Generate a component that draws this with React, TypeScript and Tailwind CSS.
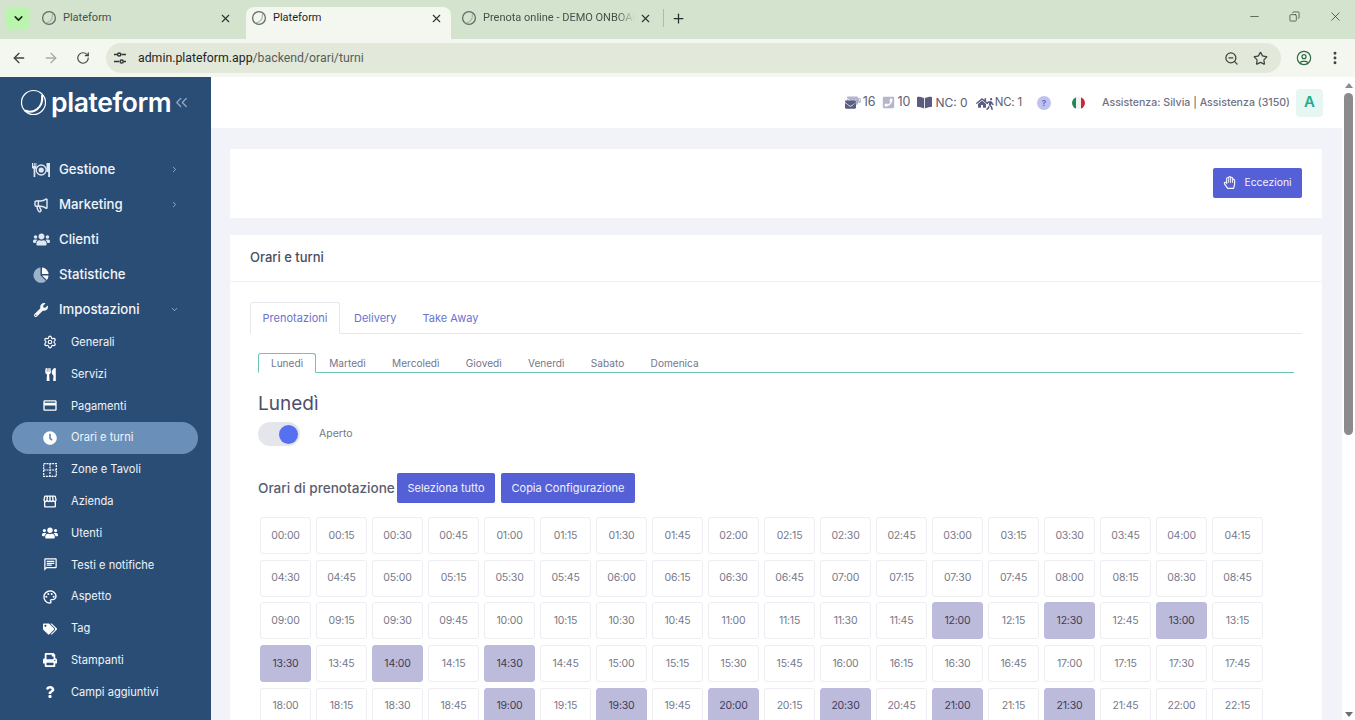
import {
  ArrowLeft,
  ArrowRight,
  ChevronDown,
  ChevronRight,
  ChevronsLeft,
  Copy,
  EllipsisVertical,
  Megaphone,
  Minus,
  Plus,
  RotateCw,
  Settings,
  Star,
  UserCircle,
  X,
  ZoomOut,
} from "lucide-react";
import {
  FaBookOpen,
  FaClock,
  FaHome,
  FaPhoneSquare,
  FaPrint,
  FaQuestion,
  FaRegHandPaper,
  FaTags,
  FaUsers,
  FaUtensils,
  FaWalking,
  FaWrench,
  FaEnvelope,
} from "react-icons/fa";
import { MdOutlineChat, MdOutlineCreditCard, MdOutlinePalette, MdOutlineStorefront } from "react-icons/md";

const appFont = "font-['Inter','Liberation_Sans',sans-serif]";

function TabFavicon() {
  return (
    <svg width="16" height="16" viewBox="0 0 16 16" fill="none" className="shrink-0">
      <circle cx="8" cy="8" r="6.4" stroke="#5f6f66" strokeWidth="1.3" />
      <path d="M4 12.5C7.5 13 12 10.5 11.5 4" stroke="#a9b8ad" strokeWidth="1.2" />
    </svg>
  );
}

function BrowserTab({ title, active, fade, className }: { title: string; active?: boolean; fade?: boolean; className: string }) {
  return (
    <div
      className={`flex h-8 shrink-0 items-center pb-[10px] ${className} ${
        active ? "rounded-t-lg bg-[#f3f7ef] text-[#1f1f1f]" : "text-[#46504a]"
      }`}
    >
      <TabFavicon />
      <span className={`ml-[6px] flex-1 overflow-hidden whitespace-nowrap text-[11px] ${fade ? "[mask-image:linear-gradient(90deg,#000_88%,transparent)]" : ""}`}>
        {title}
      </span>
      <X size={13} strokeWidth={2} className="ml-1 shrink-0 text-[#2c332e]" />
    </div>
  );
}

function BrowserChrome() {
  return (
    <div className="shrink-0 font-['Roboto',sans-serif]">
      <div className="flex h-[39px] items-end bg-[#d3e3cd] pl-[6px]">
        <div className="mb-[9px] flex h-[23px] w-[24px] items-center justify-center rounded-md bg-[#b9f5ac]">
          <ChevronDown size={13} strokeWidth={3} className="text-[#1c2b1c]" />
        </div>
        <div className="ml-[2px] flex items-end">
          <BrowserTab title="Plateform" className="w-[214px] pl-[9px] pr-[14px]" />
          <BrowserTab title="Plateform" active className="w-[205px] pl-[5px] pr-[8px]" />
          <BrowserTab title="Prenota online - DEMO ONBOARDING" fade className="w-[212px] pl-[10px] pr-[11px]" />
        </div>
        <div className="mb-[12px] h-[18px] w-px bg-[#aebcab]" />
        <Plus size={15} strokeWidth={2} className="mb-[13px] ml-[7px] text-[#26302a]" />
        <div className="mb-[15px] ml-auto flex items-center gap-[28px] pr-[12px] text-[#303a33]">
          <Minus size={13} strokeWidth={1.3} />
          <Copy size={11} strokeWidth={1.5} className="-scale-x-100" />
          <X size={15} strokeWidth={1.2} />
        </div>
      </div>
      <div className="flex h-[38px] items-center bg-[#f3f7ef] pl-[11px] pr-[12px] text-[#3c443f]">
        <ArrowLeft size={16} strokeWidth={2} />
        <ArrowRight size={16} strokeWidth={2} className="ml-[16px] text-[#a6aca6]" />
        <RotateCw size={14} strokeWidth={2} className="ml-[17px]" />
        <div className="ml-[16px] flex h-[30px] flex-1 items-center rounded-full bg-[#e2e9db] pl-[5px] pr-[13px]">
          <svg width="16" height="16" viewBox="0 0 16 16" fill="none" stroke="#2f3632" strokeWidth="1.5" className="ml-[1px] shrink-0">
            <path d="M2 4.5h3M9.5 4.5h4.5M2 11.5h5M12 11.5h2" />
            <circle cx="7.2" cy="4.5" r="1.6" />
            <circle cx="9.7" cy="11.5" r="1.6" />
          </svg>
          <span className="ml-[10px] text-[12.3px] text-[#1f2421]">
            admin.plateform.app<span className="text-[#565e58]">/backend/orari/turni</span>
          </span>
          <ZoomOut size={15} strokeWidth={2} className="ml-auto" />
          <Star size={15} strokeWidth={2} className="ml-[14px]" />
        </div>
        <UserCircle size={16} strokeWidth={1.8} className="ml-[15px] text-[#2f6a42]" />
        <EllipsisVertical size={16} strokeWidth={2.4} className="ml-[15px]" />
      </div>
    </div>
  );
}

function PlateIcon() {
  return (
    <svg width="18" height="16" viewBox="0 0 18 16" fill="#dfe7f0" className="shrink-0">
      <path d="M0 1h1v3h.7V1h1v3h.7V1h1v5L3.3 7v8H1.6V7L0 6z" />
      <path d="M14.5 1H18v14h-1.8v-5h-1.7z" />
      <circle cx="9.2" cy="8" r="5" fill="none" stroke="#dfe7f0" strokeWidth="1.3" />
      <circle cx="9.2" cy="8" r="2.6" />
    </svg>
  );
}

function PieIcon() {
  return (
    <svg width="16" height="16" viewBox="0 0 16 16" className="shrink-0">
      <path d="M7.5 .5v8l5.6 5.6A7.7 7.7 0 1 1 7.5 .5z" fill="#9fb3cb" />
      <path d="M9 .5A7 7 0 0 1 15.5 7H9z" fill="#ffffff" />
      <path d="M9 8.5h6.5a7 7 0 0 1-1.6 4.4z" fill="#ffffff" />
    </svg>
  );
}

function TableIcon() {
  return (
    <svg width="14" height="14" viewBox="0 0 14 14" fill="none" stroke="#ffffff" strokeWidth="1.2" strokeDasharray="2 .8" className="shrink-0">
      <path d="M.7.7h12.6v12.6H.7zM7 .7v12.6M.7 7h12.6" />
    </svg>
  );
}

function MainItem({ icon, label, chevron }: { icon: React.ReactNode; label: string; chevron?: "right" | "down" }) {
  return (
    <div className="flex h-[35px] items-center pl-[32px] pr-[32px]">
      <span className="flex w-[18px] justify-center">{icon}</span>
      <span className="ml-[9px] text-[13.2px] font-medium text-[#f2f5f9]">{label}</span>
      {chevron === "right" && <ChevronRight size={9} strokeWidth={2} className="ml-auto text-[#b9c7d8]" />}
      {chevron === "down" && <ChevronDown size={9} strokeWidth={2} className="ml-auto text-[#b9c7d8]" />}
    </div>
  );
}

function SubItem({ icon, label, active }: { icon: React.ReactNode; label: string; active?: boolean }) {
  return (
    <div className={`ml-[12px] mr-[13px] flex h-[31.8px] items-center rounded-full pl-[30px] ${active ? "bg-[#6a8fb8]" : ""}`}>
      <span className="flex w-[16px] justify-center text-white">{icon}</span>
      <span className="ml-[13px] text-[11.1px] text-[#f0f4f8]">{label}</span>
    </div>
  );
}

function Sidebar() {
  return (
    <aside className="w-[211px] shrink-0 overflow-hidden bg-[#2a4d76]">
      <div className="flex h-[50px] items-center pl-[20px] pt-[1px]">
        <svg width="27" height="27" viewBox="0 0 27 27" fill="none" className="shrink-0">
          <circle cx="13.5" cy="13.5" r="12" stroke="#ffffff" strokeWidth="1.2" />
          <path d="M5 21.5C12 25 24 20 22 6" stroke="#ffffff" strokeWidth="2" fill="none" />
        </svg>
        <span className="ml-[4px] text-[26.5px] leading-none font-semibold tracking-[-0.4px] text-white">plateform</span>
        <ChevronsLeft size={19} strokeWidth={1.6} className="ml-[1px] text-[#93a8c4]" />
      </div>
      <nav className="pt-[25px]">
        <MainItem icon={<PlateIcon />} label="Gestione" chevron="right" />
        <MainItem icon={<Megaphone size={16} strokeWidth={2.2} color="#dfe7f0" />} label="Marketing" chevron="right" />
        <MainItem icon={<FaUsers size={17} color="#dfe7f0" />} label="Clienti" />
        <MainItem icon={<PieIcon />} label="Statistiche" />
        <MainItem icon={<FaWrench size={14} color="#f4f6f9" />} label="Impostazioni" chevron="down" />
        <div className="-mt-[0.5px]">
          <SubItem icon={<Settings size={14} strokeWidth={2} />} label="Generali" />
          <SubItem icon={<FaUtensils size={13} />} label="Servizi" />
          <SubItem icon={<MdOutlineCreditCard size={17} />} label="Pagamenti" />
          <SubItem icon={<FaClock size={14} />} label="Orari e turni" active />
          <SubItem icon={<TableIcon />} label="Zone e Tavoli" />
          <SubItem icon={<MdOutlineStorefront size={17} />} label="Azienda" />
          <SubItem icon={<FaUsers size={16} />} label="Utenti" />
          <SubItem icon={<MdOutlineChat size={15} />} label="Testi e notifiche" />
          <SubItem icon={<MdOutlinePalette size={16} />} label="Aspetto" />
          <SubItem icon={<FaTags size={14} />} label="Tag" />
          <SubItem icon={<FaPrint size={14} />} label="Stampanti" />
          <SubItem icon={<FaQuestion size={12} />} label="Campi aggiuntivi" />
        </div>
      </nav>
    </aside>
  );
}

function TopBar() {
  return (
    <header className="flex h-[51px] items-center justify-end bg-white pr-[19px] text-[#5d6072]">
      <span className="relative h-[15px] w-[16px]">
        <FaEnvelope size={11} className="absolute top-0 left-[2px] text-[#b4b6cc]" />
        <FaEnvelope size={11} className="absolute bottom-0 left-0 text-[#5a5c80]" />
        <FaPhoneSquare size={5} className="absolute top-[3px] right-0 text-[#a9abc6]" />
      </span>
      <span className="ml-[2px] text-[12.5px]">16</span>
      <FaPhoneSquare size={13} className="ml-[7px] text-[#b4b6cc]" />
      <span className="ml-[2px] text-[12.5px]">10</span>
      <FaBookOpen size={15} className="ml-[7px] text-[#5a5c80]" />
      <span className="ml-[3px] text-[12px]">NC: 0</span>
      <span className="relative ml-[8px] flex w-[17px] text-[#5a5c80]">
        <FaHome size={12} />
        <FaWalking size={12} className="absolute top-[1px] left-[8px]" />
      </span>
      <span className="ml-[2px] text-[11.5px] tracking-[-0.2px]">NC: 1</span>
      <span className="ml-[15px] flex h-[14px] w-[14px] items-center justify-center rounded-full bg-[#bfc2ee] text-[8px] font-semibold text-[#5560d6]">?</span>
      <span className="ml-[21px] flex h-[12px] w-[13px] overflow-hidden rounded-full">
        <span className="flex-1 bg-[#1c8a55]" />
        <span className="flex-1 bg-[#f2f2f2]" />
        <span className="flex-1 bg-[#c8283c]" />
      </span>
      <span className="ml-[17px] text-[10.6px] font-medium text-[#6f7182]">Assistenza: Silvia | Assistenza (3150)</span>
      <span className="ml-[6px] flex h-[28px] w-[27px] items-center justify-center rounded-sm bg-[#e6f6f3] text-[15px] font-semibold text-[#1cae8a]">A</span>
    </header>
  );
}

const topTabs = ["Prenotazioni", "Delivery", "Take Away"];
const days = ["Lunedì", "Martedì", "Mercoledì", "Giovedì", "Venerdì", "Sabato", "Domenica"];
const selected = ["12:00", "12:30", "13:00", "13:30", "14:00", "14:30", "19:00", "19:30", "20:00", "20:30", "21:00", "21:30"];

const slots = Array.from({ length: 96 }, (_, i) => {
  const h = String(Math.floor(i / 4)).padStart(2, "0");
  const m = String((i % 4) * 15).padStart(2, "0");
  return `${h}:${m}`;
});

function SlotGrid() {
  return (
    <div className="mt-[14px] ml-[2px] grid grid-cols-[repeat(18,51px)] gap-x-[5px] gap-y-[5.7px]">
      {slots.map((slot) => (
        <div
          key={slot}
          className={`flex h-[37px] items-center justify-center rounded-[3px] border text-[10.5px] tracking-[-0.2px] ${
            selected.includes(slot)
              ? "border-[#bdbbdb] bg-[#bdbbdb] text-[#3c3c58]"
              : "border-[#eeeef2] bg-white text-[#77798a]"
          }`}
        >
          {slot}
        </div>
      ))}
    </div>
  );
}

export default function App() {
  return (
    <div className={`flex h-screen flex-col overflow-hidden ${appFont}`}>
      <BrowserChrome />
      <div className="flex min-h-0 flex-1">
        <Sidebar />
        <main className="min-w-0 flex-1 overflow-hidden bg-[#f2f3f8]">
          <TopBar />
          <div className="pl-[19px] pr-[20px] pt-[21px]">
            <section className="flex h-[69px] items-center justify-end bg-white pb-[2px] pr-[20px]">
              <button className="flex h-[30px] w-[89px] items-center justify-center gap-[8px] rounded-[2px] bg-[#5560d6] text-[10.4px] text-[#f1f2fd]">
                <FaRegHandPaper size={13} />
                Eccezioni
              </button>
            </section>
            <section className="mt-[17px] bg-white">
              <div className="flex h-[47px] items-center border-b border-[#eff0f4] px-[20px] text-[13px] font-medium text-[#4a4c60]">
                Orari e turni
              </div>
              <div className="px-[20px] pt-[20px]">
                <div className="flex h-[32px] border-b border-[#e6e7ec]">
                  {topTabs.map((tab, i) => (
                    <div
                      key={tab}
                      className={`flex h-[32px] items-center border px-[13px] text-[11px] text-[#6a72d0] ${
                        i === 0 ? "w-[90px] justify-center rounded-t-[3px] border-[#e6e7ec] border-b-white bg-white" : "border-transparent"
                      } ${i === 2 ? "-ml-[2px]" : ""}`}
                    >
                      {tab}
                    </div>
                  ))}
                </div>
                <div className="px-[8px]">
                  <div className="mt-[19px] flex h-[20px] border-b border-[#6cc5b5]">
                    {days.map((day, i) => (
                      <div
                        key={day}
                        className={`flex h-[20px] items-center pt-[1px] text-[10.1px] text-[#75778a] ${
                          i === 0
                            ? "w-[58px] justify-center rounded-t-[3px] border border-[#6cc5b5] border-b-white bg-white"
                            : "px-[13.2px]"
                        }`}
                      >
                        {day}
                      </div>
                    ))}
                  </div>
                  <h2 className="mt-[20px] text-[19px] leading-[22px] font-normal text-[#4d4f6c]">Lunedì</h2>
                  <div className="mt-[7px] flex items-center">
                    <div className="flex h-[24px] w-[42px] items-center justify-end rounded-full bg-[#e4e6ec] pr-[2px]">
                      <div className="h-[19px] w-[19px] rounded-full bg-[#5570f0]" />
                    </div>
                    <span className="ml-[19px] text-[10.5px] text-[#75778a]">Aperto</span>
                  </div>
                  <div className="mt-[27px] flex items-center">
                    <h3 className="w-[137px] whitespace-nowrap text-[13.6px] font-medium text-[#5a5c70]">Orari di prenotazione</h3>
                    <button className="ml-[2px] h-[30px] w-[98px] rounded-[2px] bg-[#5560d6] text-[11px] text-[#f1f2fd]">Seleziona tutto</button>
                    <button className="ml-[6px] h-[30px] w-[134px] rounded-[2px] bg-[#5560d6] text-[11px] text-[#f1f2fd]">Copia Configurazione</button>
                  </div>
                  <SlotGrid />
                </div>
              </div>
            </section>
          </div>
        </main>
        <div className="flex w-[13px] shrink-0 flex-col items-center bg-white pt-[6px]">
          <div className="h-0 w-0 border-x-[4px] border-b-[5px] border-x-transparent border-b-[#8b8b8b]" />
          <div className="mt-[5px] h-[342px] w-[9px] rounded-full bg-[#8b8b8b]" />
          <div className="mt-auto mb-[3px] h-0 w-0 border-x-[4px] border-t-[5px] border-x-transparent border-t-[#6e6e6e]" />
        </div>
      </div>
    </div>
  );
}
